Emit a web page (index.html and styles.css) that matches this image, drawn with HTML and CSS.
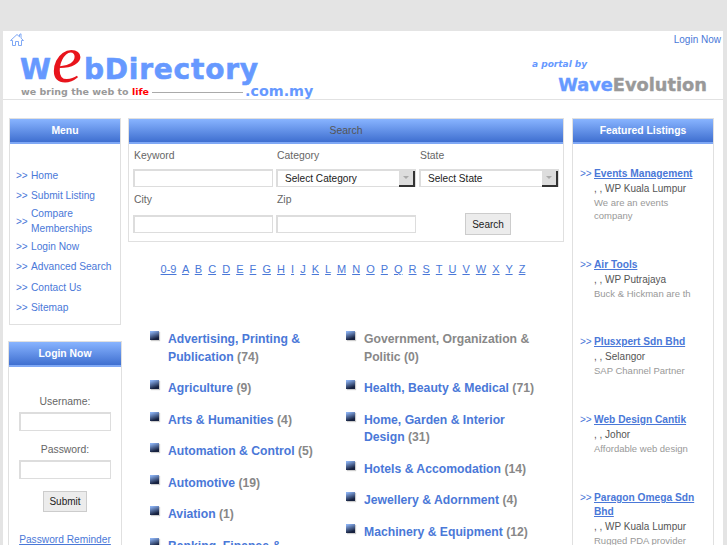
FILE: index.html
```html
<!DOCTYPE html>
<html>
<head>
  <title>WebDirectory.com.my</title>
  <link rel="stylesheet" href="styles.css">
</head>
<body>
  <div id="wrap">
    <div id="header">
      <div class="logo">
        <a class="home" href="#">
          <svg width="14" height="14" viewBox="0 0 14 14" fill="none" stroke="#7fa8f5" stroke-width="1">
            <path d="M0.5 7.5 L7 1.5 L9.5 3.8 L9.5 1.5 L11 0.8 L11 5.2 L13.5 7.5 L11.5 7.5 L11.5 12.5 L8.5 12.5 L8.5 8.5 L5.5 8.5 L5.5 12.5 L2.5 12.5 L2.5 7.5 Z"/>
          </svg>
        </a>
        <div class="logo-name">W<span class="logo-e">e</span>bDirectory</div>
        <div class="logo-line">
          <span>we bring the web to <b>life</b></span>
          <i class="logo-rule"></i>
          <span class="logo-com">.com.my</span>
        </div>
      </div>
      <div class="head-right">
        <a class="login-top" href="#">Login Now</a>
        <div class="portal">a portal by</div>
        <div class="wave"><span>Wave</span>Evolution</div>
      </div>
    </div>

    <div id="columns">
      <div id="left">
        <div class="box menu-box">
          <div class="bar">Menu</div>
          <ul class="menu">
            <li><span>&gt;&gt;</span><a href="#">Home</a></li>
            <li><span>&gt;&gt;</span><a href="#">Submit Listing</a></li>
            <li class="tall"><span>&gt;&gt;</span><a href="#">Compare Memberships</a></li>
            <li><span>&gt;&gt;</span><a href="#">Login Now</a></li>
            <li><span>&gt;&gt;</span><a href="#">Advanced Search</a></li>
            <li><span>&gt;&gt;</span><a href="#">Contact Us</a></li>
            <li><span>&gt;&gt;</span><a href="#">Sitemap</a></li>
          </ul>
        </div>
        <div class="box login-box">
          <div class="bar">Login Now</div>
          <div class="login-form">
            <label>Username:</label>
            <input type="text">
            <label class="pw">Password:</label>
            <input type="text">
            <button class="btn">Submit</button>
            <a class="reminder" href="#">Password Reminder</a>
          </div>
        </div>
      </div>

      <div id="middle">
        <div class="box search-box">
          <div class="bar bar-dim">Search</div>
          <div class="search-grid">
            <label>Keyword</label>
            <label>Category</label>
            <label>State</label>
            <input type="text">
            <div class="sel"><select><option>Select Category</option></select><i class="sel-btn"></i></div>
            <div class="sel"><select><option>Select State</option></select><i class="sel-btn"></i></div>
            <label class="low">City</label>
            <label class="low">Zip</label>
            <span></span>
            <input type="text">
            <input type="text">
            <div class="search-act"><button class="btn">Search</button></div>
          </div>
        </div>

        <div class="letters">
          <a href="#">0-9</a> <a href="#">A</a> <a href="#">B</a> <a href="#">C</a> <a href="#">D</a> <a href="#">E</a> <a href="#">F</a> <a href="#">G</a> <a href="#">H</a> <a href="#">I</a> <a href="#">J</a> <a href="#">K</a> <a href="#">L</a> <a href="#">M</a> <a href="#">N</a> <a href="#">O</a> <a href="#">P</a> <a href="#">Q</a> <a href="#">R</a> <a href="#">S</a> <a href="#">T</a> <a href="#">U</a> <a href="#">V</a> <a href="#">W</a> <a href="#">X</a> <a href="#">Y</a> <a href="#">Z</a>
        </div>

        <div class="cats">
          <ul class="cat-col">
            <li><a href="#">Advertising, Printing &amp; Publication</a> (74)</li>
            <li><a href="#">Agriculture</a> (9)</li>
            <li><a href="#">Arts &amp; Humanities</a> (4)</li>
            <li><a href="#">Automation &amp; Control</a> (5)</li>
            <li><a href="#">Automotive</a> (19)</li>
            <li><a href="#">Aviation</a> (1)</li>
            <li><a href="#">Banking, Finance &amp; Insurance</a> (8)</li>
          </ul>
          <ul class="cat-col col-two">
            <li>Government, Organization &amp; Politic (0)</li>
            <li><a href="#">Health, Beauty &amp; Medical</a> (71)</li>
            <li><a href="#">Home, Garden &amp; Interior Design</a> (31)</li>
            <li><a href="#">Hotels &amp; Accomodation</a> (14)</li>
            <li><a href="#">Jewellery &amp; Adornment</a> (4)</li>
            <li><a href="#">Machinery &amp; Equipment</a> (12)</li>
          </ul>
        </div>
      </div>

      <div id="right">
        <div class="box feat-box">
          <div class="bar">Featured Listings</div>
          <div class="feat feat-first">
            <span class="arrows">&gt;&gt;</span>
            <div class="feat-text">
              <a href="#">Events Management</a>
              <p class="place">, , WP Kuala Lumpur</p>
              <p class="desc">We are an events company</p>
            </div>
          </div>
          <div class="feat feat-second">
            <span class="arrows">&gt;&gt;</span>
            <div class="feat-text">
              <a href="#">Air Tools</a>
              <p class="place">, , WP Putrajaya</p>
              <p class="desc">Buck &amp; Hickman are th</p>
            </div>
          </div>
          <div class="feat">
            <span class="arrows">&gt;&gt;</span>
            <div class="feat-text">
              <a href="#">Plusxpert Sdn Bhd</a>
              <p class="place">, , Selangor</p>
              <p class="desc">SAP Channel Partner</p>
            </div>
          </div>
          <div class="feat">
            <span class="arrows">&gt;&gt;</span>
            <div class="feat-text">
              <a href="#">Web Design Cantik</a>
              <p class="place">, , Johor</p>
              <p class="desc">Affordable web design</p>
            </div>
          </div>
          <div class="feat">
            <span class="arrows">&gt;&gt;</span>
            <div class="feat-text">
              <a href="#">Paragon Omega Sdn Bhd</a>
              <p class="place">, , WP Kuala Lumpur</p>
              <p class="desc">Rugged PDA provider</p>
            </div>
          </div>
        </div>
      </div>
    </div>
  </div>
</body>
</html>
```

FILE: styles.css
```css
html, body {
  margin: 0;
  padding: 0;
  height: 545px;
  overflow: hidden;
}

body {
  background: #e4e4e4;
  color: #666;
  font-family: "Liberation Sans", Arial, sans-serif;
  font-size: 10.4px;
}

a {
  color: #4a78d8;
}

#wrap {
  background: #fff;
  width: 720px;
  margin: 31px 0 0 3px;
}

/* header */
#header {
  display: flex;
  justify-content: space-between;
  height: 68px;
  border-bottom: 1px solid #e2e2e2;
}

.logo {
  padding: 2px 0 0 7px;
  width: 320px;
}

.home {
  display: block;
  height: 14px;
}

.logo-name {
  margin: 2px 0 0 10px;
  height: 34px;
  color: #6699ff;
  font-family: "DejaVu Sans", sans-serif;
  font-weight: bold;
  font-size: 28px;
  line-height: 34px;
  letter-spacing: 0.8px;
  -webkit-text-stroke-width: 0.6px;
  white-space: nowrap;
}

.logo-e {
  color: #e8141c;
  font-family: "Liberation Serif", serif;
  font-style: italic;
  font-weight: normal;
  font-size: 68px;
  line-height: 20px;
  letter-spacing: 2px;
  vertical-align: -3px;
  -webkit-text-stroke-width: 0;
}

.logo-line {
  display: flex;
  align-items: center;
  margin: 0 0 0 11px;
  color: #999;
  font-family: "DejaVu Sans", sans-serif;
  font-weight: bold;
  font-size: 9.5px;
  white-space: nowrap;
}

.logo-line b {
  color: #f00;
}

.logo-rule {
  width: 91px;
  margin: 3px 2px 0 3px;
  border-top: 1px solid #aaa;
}

.logo-com {
  color: #6699ff;
  font-size: 14.3px;
}

.head-right {
  position: relative;
  width: 200px;
}

.login-top {
  position: absolute;
  top: 2px;
  right: 2px;
  text-decoration: none;
  font-size: 10px;
  line-height: 13px;
}

.portal {
  position: absolute;
  top: 28px;
  left: 9px;
  color: #6699ff;
  font-family: "DejaVu Sans", sans-serif;
  font-style: italic;
  font-weight: bold;
  font-size: 9px;
}

.wave {
  position: absolute;
  top: 42px;
  right: 16px;
  color: #999;
  font-family: "DejaVu Sans", sans-serif;
  font-weight: bold;
  font-size: 17.8px;
  line-height: 24px;
  -webkit-text-stroke-width: 0.4px;
  white-space: nowrap;
}

.wave span {
  color: #6699ff;
}

/* columns */
#columns {
  display: flex;
  align-items: flex-start;
  padding: 18px 0 0 5px;
}

#left {
  width: 114px;
  margin-right: 6px;
}

#middle {
  width: 436px;
  margin-right: 8px;
}

#right {
  width: 142px;
}

.box {
  border: 1px solid #e0e0e0;
}

.bar {
  height: 23px;
  border-bottom: 2px solid #7fa8f5;
  background: linear-gradient(#88b4ff, #3f6fd0);
  color: #fff;
  font-weight: bold;
  font-size: 10.4px;
  line-height: 24px;
  text-align: center;
}

.bar-dim {
  color: #555;
  font-weight: normal;
}

/* menu */
.menu-box {
  margin-left: 1px;
  width: 110px;
}

.menu {
  list-style: none;
  margin: 0;
  padding: 21px 0 6px 6px;
}

.menu li {
  display: flex;
  align-items: center;
  min-height: 20.5px;
  line-height: 15px;
}

.menu li.tall {
  min-height: 30px;
}

.menu span {
  flex: none;
  width: 15px;
  color: #4a78d8;
  font-size: 10px;
}

.menu a {
  text-decoration: none;
  font-size: 10.2px;
}

/* login */
.login-box {
  margin-top: 16px;
}

.login-form {
  display: flex;
  flex-direction: column;
  align-items: center;
  padding: 28px 0 0;
}

.login-form label {
  line-height: 14px;
}

.login-form .pw {
  margin-top: 12px;
}

.login-form input {
  width: 92px;
  height: 19px;
  margin-top: 3px;
}

input, .sel {
  box-sizing: border-box;
  border: 1px solid #ddd;
  border-width: 2px 1px 1px 2px;
  padding: 0;
  background: #fff;
}

.btn {
  box-sizing: border-box;
  height: 22px;
  padding: 0 6px;
  border: 1px solid #ccc;
  background: #ececec;
  color: #222;
  font-family: "Liberation Sans", Arial, sans-serif;
  font-size: 10px;
}

.login-form .btn {
  height: 21px;
  margin-top: 12px;
  padding: 0 5px;
}

.reminder {
  margin-top: 22px;
  font-size: 10.2px;
}

/* search */
.search-grid {
  display: grid;
  grid-template-columns: 143px 143px 1fr;
  padding: 0 0 6px 4px;
  align-items: center;
}

.search-grid label {
  height: 25px;
  padding-left: 1px;
  line-height: 23px;
}

.search-grid label.low {
  line-height: 25px;
}

.search-grid input, .sel {
  height: 18px;
  width: 140px;
}

.sel {
  position: relative;
}

.sel select {
  appearance: none;
  width: 100%;
  height: 15px;
  border: 0;
  padding: 0 0 0 7px;
  background: #fff;
  color: #222;
  font-family: "Liberation Sans", Arial, sans-serif;
  font-size: 10.1px;
  line-height: 15px;
}

.sel-btn {
  position: absolute;
  top: 0;
  right: 0;
  width: 16px;
  height: 16px;
  background: #ddd;
  border-right: 2px solid #333;
  border-bottom: 2px solid #333;
  box-sizing: border-box;
}

.sel-btn::after {
  content: "";
  position: absolute;
  left: 4px;
  top: 5px;
  border: 3px solid transparent;
  border-top-color: #aaa;
}

.search-act {
  display: flex;
  justify-content: center;
  padding: 1px 6px 0 0;
}

/* letters */
.letters {
  margin-top: 21px;
  padding-right: 6px;
  height: 68px;
  text-align: center;
  font-size: 11px;
  word-spacing: 3px;
}

/* categories */
.cats {
  display: flex;
}

.cat-col {
  list-style: none;
  margin: 0;
  padding: 0 0 0 21px;
  width: 175px;
  flex: none;
}

.col-two {
  padding-left: 21px;
  width: 195px;
}

.cat-col li {
  position: relative;
  margin-bottom: 14px;
  padding-left: 19px;
  color: #888;
  font-weight: bold;
  font-size: 12.2px;
  line-height: 17.5px;
}

.cat-col li::before {
  content: "";
  position: absolute;
  left: 1px;
  top: 0;
  width: 9px;
  height: 9px;
  background: linear-gradient(160deg, #8ab0f0 10%, #16213f 80%);
  box-shadow: 1px 1px 1px #ccc;
}

.cat-col a {
  text-decoration: none;
}

/* featured */
.feat-box {
  height: 430px;
}

.feat {
  display: flex;
  min-height: 78px;
  padding-left: 7px;
}

.feat-first {
  margin-top: 23px;
  min-height: 91px;
}

.feat-second {
  min-height: 77px;
}

.feat-text {
  width: 104px;
}

.arrows {
  flex: none;
  width: 14px;
  color: #4a78d8;
  font-size: 10px;
  line-height: 14px;
}

.feat a {
  font-weight: bold;
  font-size: 10.2px;
  line-height: 14px;
}

.place {
  margin: 0;
  color: #555;
  font-size: 10px;
  line-height: 15px;
}

.desc {
  margin: 0;
  color: #999;
  font-size: 9.5px;
  line-height: 13px;
}
```
